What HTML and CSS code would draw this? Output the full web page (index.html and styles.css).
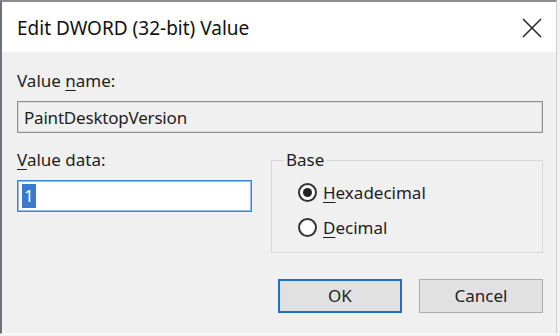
FILE: index.html
```html
<!DOCTYPE html>
<html lang="en">
<head>
    <meta charset="UTF-8">
    <title>Edit DWORD (32-bit) Value</title>
    <link rel="stylesheet" href="styles.css">
</head>
<body>

<div class="window">
    <div class="titlebar">
        <span class="title">Edit DWORD (32-bit) Value</span>
        <svg class="close" width="20" height="20" viewBox="0 0 20 20">
            <path d="M1 1 L19 19 M19 1 L1 19" stroke="#2b2b2b" stroke-width="1.6" fill="none"/>
        </svg>
    </div>

    <div class="content">
        <div class="label label-name">Value <u>n</u>ame:</div>
        <div class="name-box">PaintDesktopVersion</div>

        <div class="row">
            <div class="data-col">
                <div class="label"><u>V</u>alue data:</div>
                <div class="data-box"><span class="selected">1</span></div>
            </div>

            <fieldset class="base">
                <legend>Base</legend>
                <div class="radios">
                    <div class="radio">
                        <span class="dot checked"></span>
                        <span><u>H</u>exadecimal</span>
                    </div>
                    <div class="radio">
                        <span class="dot"></span>
                        <span><u>D</u>ecimal</span>
                    </div>
                </div>
            </fieldset>
        </div>

        <div class="buttons">
            <div class="btn btn-default">OK</div>
            <div class="btn">Cancel</div>
        </div>
    </div>
</div>

</body>
</html>
```

FILE: styles.css
```css
/* Общие стили */
body {
    margin: 0;
    padding: 0;
    width: 560px;
    height: 336px;
    overflow: hidden;
    background-color: #f3f3f3;
    font-family: 'Noto Sans', 'Open Sans', sans-serif;
    font-size: 17px;
    color: #1e1e1e;
}

u {
    text-decoration-thickness: 1px;
    text-underline-offset: 3px;
}

/* Окно */
.window {
    box-sizing: border-box;
    width: 557px;
    height: 334px;
    border-top: 2px solid #8d8d8d;
    border-left: 2px solid #6c717c;
    border-right: 1px solid #cfcfcf;
    border-bottom: 1px solid #ffffff;
    background-color: #f0f0f0;
}

/* Заголовок */
.titlebar {
    height: 50px;
    background-color: #fff;
    display: flex;
    align-items: center;
    justify-content: space-between;
    padding: 0 14px 0 15px;
}

.title {
    font-size: 19px;
    color: #111;
    margin-top: 2px;
}

.close {
    margin-top: 2px;
}

/* Содержимое */
.content {
    padding: 0 13px 0 15px;
}

.label {
    line-height: 22px;
}

.label-name {
    margin-top: 18px;
}

.name-box {
    box-sizing: border-box;
    height: 32px;
    margin-top: 9px;
    border: 1px solid #8e8e8e;
    box-shadow: inset 0 0 0 1px #dadada;
    padding: 4px 6px 2px;
    line-height: 24px;
    letter-spacing: -0.2px;
}

.row {
    display: flex;
    gap: 19px;
    margin-top: 16px;
}

.data-col {
    width: 235px;
}

.data-box {
    box-sizing: border-box;
    height: 32px;
    margin-top: 9px;
    background-color: #fff;
    border: 1px solid #3d86d4;
    box-shadow: inset 0 0 0 1px #8cbcec;
    padding: 3px 4px;
}

.selected {
    display: inline-block;
    background-color: #3a79cc;
    color: #fff;
    line-height: 24px;
    padding: 0 2px;
}

/* Основание */
.base {
    box-sizing: border-box;
    width: 272px;
    height: 104px;
    margin: 0;
    padding: 4px 0 0 0;
    border: 1px solid #d8d8d8;
}

.base legend {
    padding: 0 2px;
    margin-left: 12px;
    line-height: 22px;
}

.radios {
    padding-left: 26px;
}

.radio {
    display: flex;
    align-items: center;
    gap: 6px;
    height: 35px;
}

.dot {
    box-sizing: border-box;
    width: 19px;
    height: 19px;
    border: 2px solid #333;
    border-radius: 50%;
    background-color: #fff;
    display: flex;
    align-items: center;
    justify-content: center;
}

.dot.checked::after {
    content: "";
    width: 9px;
    height: 9px;
    border-radius: 50%;
    background-color: #222;
}

/* Кнопки */
.buttons {
    display: flex;
    justify-content: flex-end;
    gap: 17px;
    margin-top: 26px;
}

.btn {
    box-sizing: border-box;
    width: 124px;
    height: 34px;
    background-color: #e1e1e1;
    border: 1px solid #adadad;
    text-align: center;
    line-height: 32px;
}

.btn-default {
    border: 2px solid #1f6fc9;
    line-height: 30px;
}
```
